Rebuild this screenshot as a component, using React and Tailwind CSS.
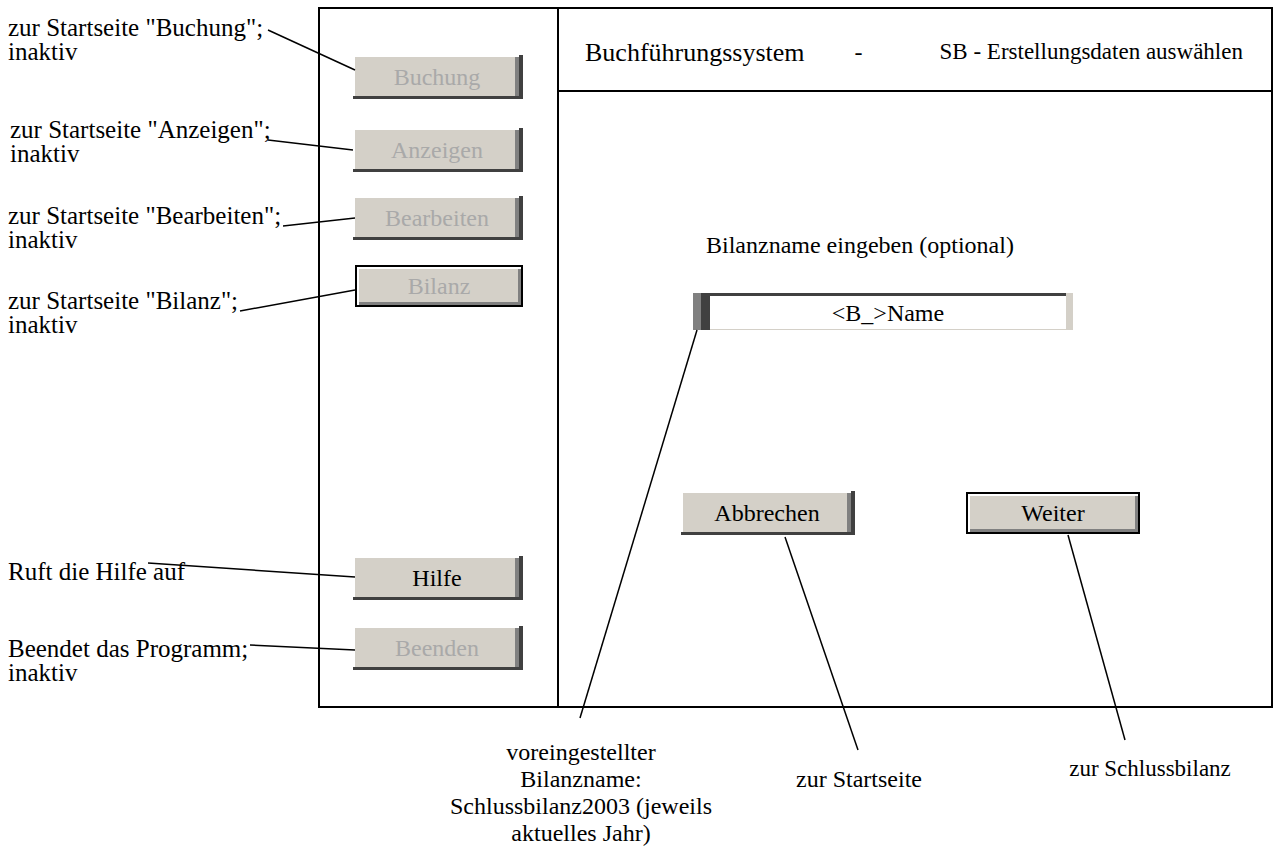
import React from 'react';

/* ── Buttons ── */
const FlatButton = ({ label, disabled, width = 'w-[168px]' }) => (
  <div className={`relative ${width} h-[42px]`}>
    <div className="absolute right-0 top-[-2px] bottom-0 w-[4px] bg-[#404040]" />
    <div className="absolute left-[-2px] right-0 bottom-0 h-[3px] bg-[#404040]" />
    <div className="absolute left-0 top-0 right-[4px] bottom-[3px] bg-[#d4d0c8] shadow-[inset_-4px_0_0_#808080] flex items-center justify-center">
      <span className={disabled ? 'text-[#a9a9a9]' : 'text-black'}>{label}</span>
    </div>
  </div>
);

const RaisedButton = ({ label, disabled, className = '' }) => (
  <div
    className={`h-[42px] border-2 border-black bg-[#d4d0c8] shadow-[inset_2px_2px_0_#ffffff,inset_-3px_-3px_0_#808080] flex items-center justify-center ${className}`}
  >
    <span className={disabled ? 'text-[#a9a9a9]' : 'text-black'}>{label}</span>
  </div>
);

const NameInput = () => (
  <div className="flex w-[380px] h-[37px]">
    <div className="w-[8px] bg-[#808080]" />
    <div className="flex-1 flex border-t-[3px] border-[#404040]">
      <div className="w-[9px] bg-[#404040]" />
      <div className="flex-1 bg-white border-b border-[#d4d0c8] flex items-center justify-center">
        &lt;B_&gt;Name
      </div>
    </div>
    <div className="w-[7px] bg-[#d4d0c8]" />
  </div>
);

/* ── Annotation lines (drawn over everything) ── */
const lines = [
  [268, 30, 355, 70],
  [268, 140, 353, 150],
  [283, 226, 355, 218],
  [240, 311, 355, 290],
  [148, 563, 355, 577],
  [250, 645, 355, 650],
  [697, 330, 580, 718],
  [785, 537, 858, 750],
  [1068, 535, 1125, 740],
];

const Note = ({ children, className = '' }) => (
  <div className={`leading-[24px] text-[25px] ${className}`}>{children}</div>
);

export default function App() {
  return (
    <div className="relative w-[1276px] h-[856px] bg-white text-black text-[24px] [font-family:'Liberation_Serif','Times_New_Roman',serif] overflow-hidden">
      <div className="flex pt-[7px]">
        {/* ── Left annotations ── */}
        <div className="w-[318px] flex flex-col pl-[8px]">
          <Note className="mt-[9px]">zur Startseite "Buchung";<br />inaktiv</Note>
          <Note className="mt-[54px] pl-[2px]">zur Startseite "Anzeigen";<br />inaktiv</Note>
          <Note className="mt-[38px]">zur Startseite "Bearbeiten";<br />inaktiv</Note>
          <Note className="mt-[37px]">zur Startseite "Bilanz";<br />inaktiv</Note>
          <Note className="mt-[223px]">Ruft die Hilfe auf</Note>
          <Note className="mt-[53px]">Beendet das Programm;<br />inaktiv</Note>
        </div>

        {/* ── Window frame ── */}
        <div className="w-[955px] h-[701px] border-2 border-black flex">
          {/* Sidebar */}
          <div className="w-[239px] border-r-2 border-black flex flex-col pl-[35px]">
            <div className="mt-[48px]"><FlatButton label="Buchung" disabled /></div>
            <div className="mt-[31px]"><FlatButton label="Anzeigen" disabled /></div>
            <div className="mt-[26px]"><FlatButton label="Bearbeiten" disabled /></div>
            <div className="mt-[25px]"><RaisedButton label="Bilanz" disabled className="w-[168px]" /></div>
            <div className="mt-[251px]"><FlatButton label="Hilfe" /></div>
            <div className="mt-[28px]"><FlatButton label="Beenden" disabled /></div>
          </div>

          {/* Main panel */}
          <div className="flex-1 flex flex-col">
            <div className="h-[83px] border-b-2 border-black flex items-center pl-[26px] pt-[5px]">
              <span className="text-[26px]">Buchführungssystem</span>
              <span className="ml-[50px]">-</span>
              <span className="ml-[77px] text-[23px]">SB - Erstellungsdaten auswählen</span>
            </div>

            <div className="flex-1 flex flex-col pl-[134px]">
              <div className="mt-[135px] pl-[13px]">Bilanzname eingeben (optional)</div>
              <div className="mt-[30px]"><NameInput /></div>
              <div className="mt-[163px] flex -ml-[10px]">
                <FlatButton label="Abbrechen" width="w-[172px]" />
                <RaisedButton label="Weiter" className="w-[174px] ml-[111px] -mt-[1px]" />
              </div>
            </div>
          </div>
        </div>
      </div>

      {/* ── Bottom annotations ── */}
      <div className="flex">
        <div className="w-[300px] ml-[431px] mt-[31px] text-center leading-[27px]">
          voreingestellter<br />Bilanzname:<br />Schlussbilanz2003 (jeweils<br />aktuelles Jahr)
        </div>
        <div className="w-[190px] ml-[33px] mt-[53px] text-center">zur Startseite</div>
        <div className="w-[190px] ml-[101px] mt-[44px] text-center text-[23px]">zur Schlussbilanz</div>
      </div>

      <svg className="absolute inset-0 pointer-events-none" width="1276" height="856">
        {lines.map(([x1, y1, x2, y2], i) => (
          <line key={i} x1={x1} y1={y1} x2={x2} y2={y2} stroke="#000" strokeWidth="1.5" />
        ))}
      </svg>
    </div>
  );
}
